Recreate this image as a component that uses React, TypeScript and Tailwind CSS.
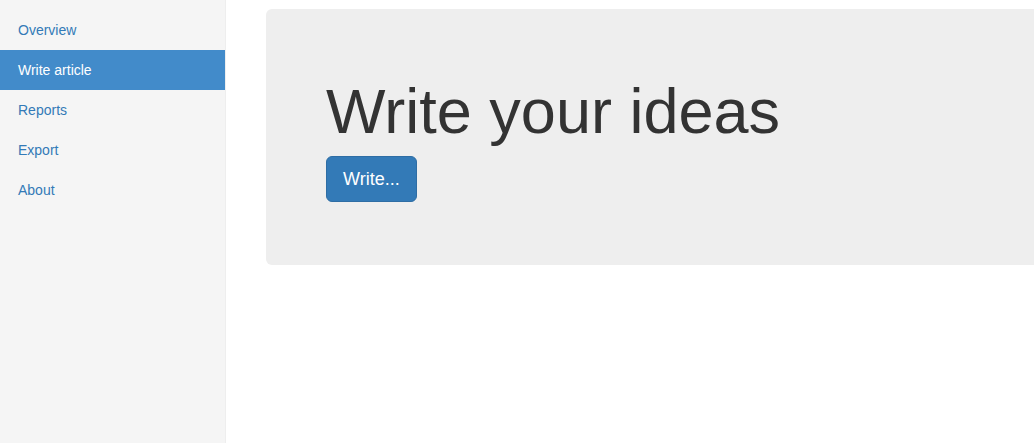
import React from "react";

const navItems = ["Overview", "Write article", "Reports", "Export", "About"];

export default function App() {
  const active = "Write article";

  return (
    <div className="flex h-[443px] w-[1034px] overflow-hidden bg-white font-['Liberation_Sans',Arial,sans-serif] text-[14px] text-[#333]">
      <aside className="w-[226px] shrink-0 border-r border-[#eee] bg-[#f5f5f5] pt-[10px]">
        <ul>
          {navItems.map((item) => (
            <li key={item}>
              <a
                href="#"
                className={
                  item === active
                    ? "block h-[40px] pl-[18px] leading-[40px] bg-[#428bca] text-white"
                    : "block h-[40px] pl-[18px] leading-[40px] text-[#337ab7]"
                }
              >
                {item}
              </a>
            </li>
          ))}
        </ul>
      </aside>

      <main className="pl-[40px] pt-[9px]">
        <div className="w-[900px] rounded-[6px] bg-[#eee] px-[60px] pt-[48px] pb-[48px]">
          <h1 className="mt-[20px] mb-[10px] text-[63px] leading-[1.1] text-[#333]">Write your ideas</h1>
          <p className="mb-[15px] text-[21px] leading-[30px]">
            <button className="rounded-[6px] border border-[#2e6da4] bg-[#337ab7] px-[16px] py-[10px] text-[18px] leading-[24px] text-white align-middle">
              Write...
            </button>
          </p>
        </div>
      </main>
    </div>
  );
}
